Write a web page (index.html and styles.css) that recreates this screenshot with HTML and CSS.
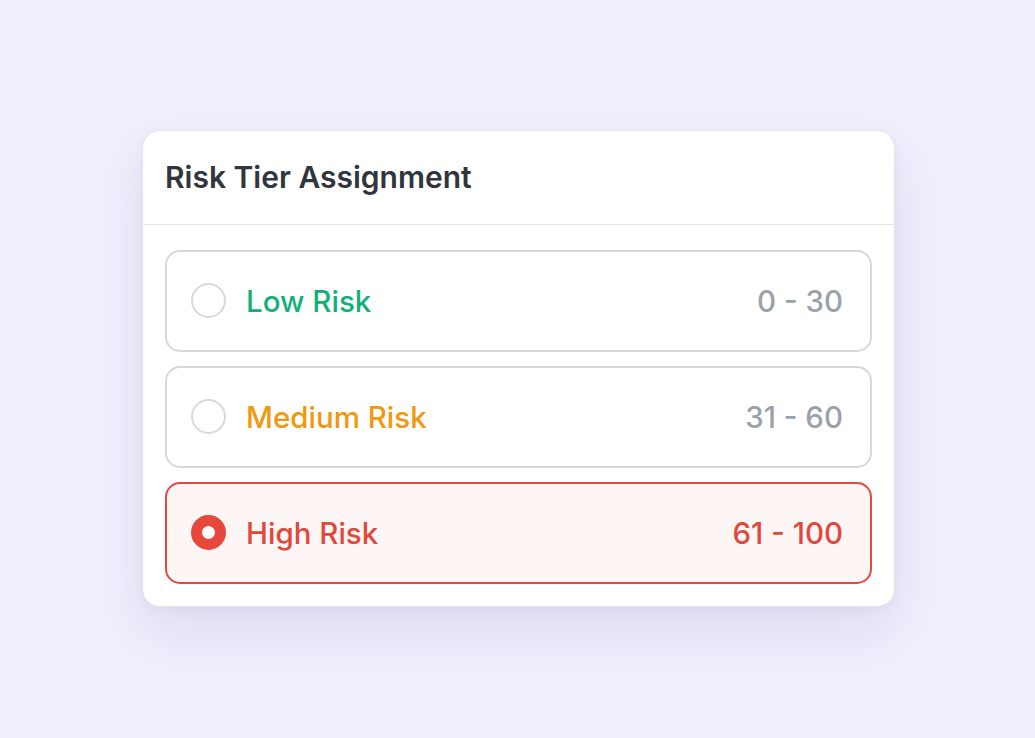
FILE: index.html
```html
<!DOCTYPE html>
<html lang="en">
<head>
<meta charset="utf-8">
<title>Risk Tier Assignment</title>
<link rel="stylesheet" href="styles.css">
</head>
<body>
<main class="stage">
  <section class="card">
    <header class="card-header">
      <h1 class="card-title">Risk Tier Assignment</h1>
    </header>
    <div class="options">
      <label class="option">
        <span class="radio"></span>
        <span class="option-label label-low">Low Risk</span>
        <span class="option-range">0 - 30</span>
      </label>
      <label class="option">
        <span class="radio"></span>
        <span class="option-label label-medium">Medium Risk</span>
        <span class="option-range">31 - 60</span>
      </label>
      <label class="option option-selected">
        <span class="radio radio-checked"></span>
        <span class="option-label label-high">High Risk</span>
        <span class="option-range range-high">61 - 100</span>
      </label>
    </div>
  </section>
</main>
</body>
</html>
```
FILE: styles.css
```css
* { box-sizing: border-box; }
html, body { margin: 0; padding: 0; }
body {
  background: #f0effc;
  font-family: "Inter", "Noto Sans", sans-serif;
  width: 1035px;
  height: 738px;
  overflow: hidden;
}
.stage {
  width: 1035px;
  height: 738px;
  display: flex;
  align-items: center;
  justify-content: center;
  padding-left: 2px;
  padding-bottom: 2px;
}
.card {
  width: 753px;
  background: #ffffff;
  border: 1px solid #e4e3ef;
  border-radius: 18px;
  box-shadow: 0 24px 56px rgba(90, 80, 160, 0.12), 0 4px 12px rgba(90, 80, 160, 0.05);
  overflow: hidden;
}
.card-header {
  height: 94px;
  display: flex;
  align-items: center;
  padding: 0 22px;
  border-bottom: 1px solid #e5e7eb;
}
.card-title {
  margin: 0;
  font-size: 30px;
  font-weight: 600;
  color: #31353c;
  letter-spacing: 0;
}
.options {
  display: flex;
  flex-direction: column;
  gap: 14px;
  padding: 25px 22px 22px;
}
.option {
  height: 102px;
  display: flex;
  align-items: center;
  gap: 20px;
  padding: 0 27px 0 24px;
  border: 2px solid #d5d8de;
  border-radius: 15px;
  background: #ffffff;
}
.option-selected {
  border-color: #e5483e;
  background: #fef6f5;
}
.radio {
  width: 35px;
  height: 35px;
  flex: none;
  border: 2px solid #d7d9dd;
  border-radius: 50%;
  background: #ffffff;
}
.radio-checked {
  border: 11.5px solid #e8473c;
  background: #ffffff;
}
.option-label {
  flex: 1;
  font-size: 29.5px;
  font-weight: 500;
}
.label-low { color: #12b077; }
.label-medium { color: #f0980f; }
.label-high { color: #e2473c; }
.option-range {
  font-size: 29.5px;
  font-weight: 500;
  color: #9aa1ab;
}
.range-high { color: #e2473c; }
```
